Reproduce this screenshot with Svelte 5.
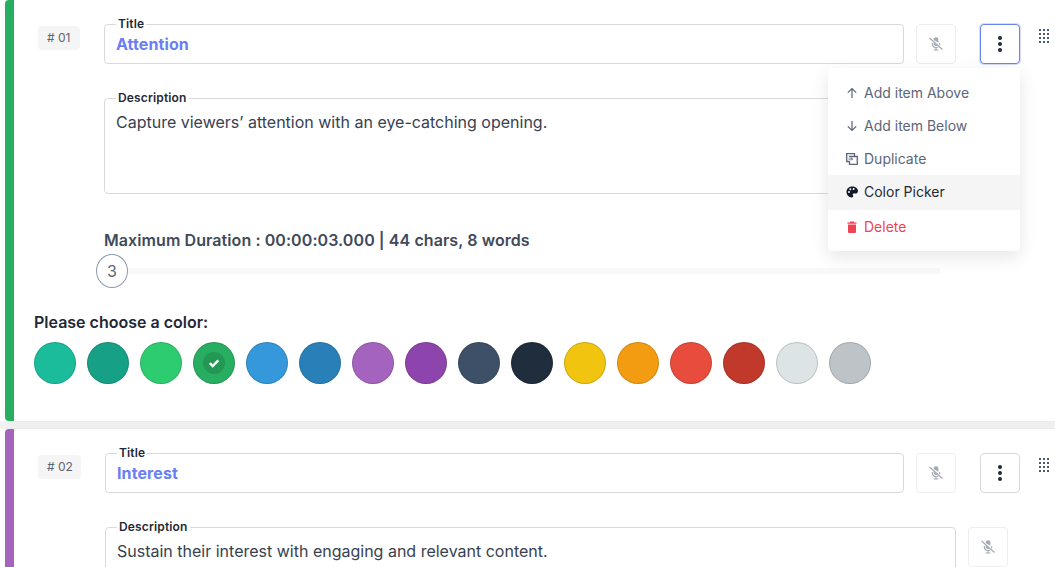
<script>
    const swatches = [
        '#1abc9c', '#16a085', '#2ecc71', '#27ae60', '#3498db', '#2980b9', '#a463bf', '#8e44ad', '#3d5068',
        '#1f2d3d', '#f1c40f', '#f39c12', '#e74c3c', '#c0392b', '#dde4e6', '#bdc3c7'
    ];
    const selected = '#27ae60';
    const menu = [
        { label: 'Add item Above', icon: 'up' },
        { label: 'Add item Below', icon: 'down' },
        { label: 'Duplicate', icon: 'copy' },
        { label: 'Color Picker', icon: 'palette', active: true },
        { label: 'Delete', icon: 'trash', danger: true }
    ];
    const handleDots = Array.from({ length: 12 }, (_, i) => i);
</script>

{#snippet micOff()}
    <svg class="mic" viewBox="0 0 16 16" width="16" height="16" aria-hidden="true">
        <path d="M5.6 3.6a2.4 2.4 0 0 1 4.8 0v3.2L5.7 3.900z M5.6 6.400l3.900 3.100a2.400 2.400 0 0 1-3.900-1.700z" fill="#a3a9b3"/>
        <path d="M3.800 7v1a4.200 4.200 0 0 0 3.600 4.100v1.400H5.600v1.100h4.800v-1.100H8.600v-1.400c.8-.1 1.400-.4 2-.8l-.9-.7a3.100 3.100 0 0 1-4.800-2.600V7z M12.200 7h-1.100v1c0 .3 0 .5-.1.8l.9.7c.2-.5.3-1 .3-1.500z" fill="#a3a9b3"/>
        <path d="M1.500 2l13 11.500" stroke="#a3a9b3" stroke-width="1.100" fill="none"/>
    </svg>
{/snippet}

{#snippet dots()}
    <svg viewBox="0 0 4 16" width="4" height="16" aria-hidden="true">
        <circle cx="2" cy="2" r="2" fill="#1f2937"/>
        <circle cx="2" cy="8" r="2" fill="#1f2937"/>
        <circle cx="2" cy="14" r="2" fill="#1f2937"/>
    </svg>
{/snippet}

{#snippet handle()}
    <div class="handle">
        {#each handleDots as d (d)}
            <span></span>
        {/each}
    </div>
{/snippet}

{#snippet menuIcon(name)}
    <svg viewBox="0 0 12 12" width="12" height="12" aria-hidden="true">
        {#if name === 'up'}
            <path d="M6 11V1.500M1.800 5.700l4.200-4.200 4.200 4.200" fill="none" stroke="currentColor" stroke-width="1.200"/>
        {:else if name === 'down'}
            <path d="M6 1v9.500M1.800 6.300l4.200 4.200 4.200-4.200" fill="none" stroke="currentColor" stroke-width="1.200"/>
        {:else if name === 'copy'}
            <path d="M3.500 8.500H.7V.7h7.800v2.800" fill="none" stroke="currentColor" stroke-width="1.300"/>
            <path d="M3 3.500h8.300v7.800H3.500V8" fill="none" stroke="currentColor" stroke-width="1.300"/>
            <path d="M2.500 6h4M5 4.500L6.500 6 5 7.500" fill="none" stroke="currentColor" stroke-width="1"/>
        {:else if name === 'palette'}
            <path d="M6 .6C2.900.6.500 3 .500 6s2.400 5.400 5.300 5.400c1 0 1.400-.6 1.400-1.200 0-.7-.5-1-.5-1.600 0-.6.500-1 1.100-1h1.400c1.500 0 2.800-1 2.800-2.600C12 2.500 9.300.6 6 .6z" fill="#111827"/>
            <circle cx="3" cy="6" r="1" fill="#fff"/>
            <circle cx="4.300" cy="3.300" r="1" fill="#fff"/>
            <circle cx="7.600" cy="3" r="1" fill="#fff"/>
        {:else}
            <path d="M4.200 0.500h3.600l.5 1H10.500v1.300h-9V1.500h2.200z" fill="currentColor"/>
            <path d="M2 3.600h8V11a1 1 0 0 1-1 1H3a1 1 0 0 1-1-1z" fill="currentColor"/>
        {/if}
    </svg>
{/snippet}

<div class="list">
    <section class="card" style="border-left-color: #27ae60">
        <div class="item">
            <div class="badge"># 01</div>
            <div class="fields">
                <div class="row">
                    <div class="field title-field">
                        <span class="legend">Title</span>
                        <div class="value title">Attention</div>
                    </div>
                    <button class="icon-btn">{@render micOff()}</button>
                    <div class="menu-wrap">
                        <button class="icon-btn more focused">{@render dots()}</button>
                        <ul class="menu">
                            {#each menu as m}
                                <li class:active={m.active} class:danger={m.danger}>
                                    {@render menuIcon(m.icon)}
                                    <span>{m.label}</span>
                                </li>
                            {/each}
                        </ul>
                    </div>
                    {@render handle()}
                </div>
                <div class="row desc-row">
                    <div class="field desc-field">
                        <span class="legend">Description</span>
                        <div class="value">Capture viewers’ attention with an eye-catching opening.</div>
                    </div>
                    <button class="icon-btn">{@render micOff()}</button>
                </div>
                <div class="duration">Maximum Duration : 00:00:03.000 | 44 chars, 8 words</div>
                <div class="slider">
                    <div class="thumb">3</div>
                    <div class="track"></div>
                </div>
            </div>
        </div>
        <div class="colors">
            <div class="colors-label">Please choose a color:</div>
            <div class="swatches">
                {#each swatches as c}
                    <div class="swatch" style="background: {c}">
                        {#if c === selected}
                            <span class="check">
                                <svg viewBox="0 0 12 12" width="12" height="12" aria-hidden="true">
                                    <path d="M1.800 6.200l2.900 2.900L10.300 3.300" fill="none" stroke="#fff" stroke-width="2.400"/>
                                </svg>
                            </span>
                        {/if}
                    </div>
                {/each}
            </div>
        </div>
    </section>

    <section class="card" style="border-left-color: #a463bf">
        <div class="item">
            <div class="badge badge-wide"># 02</div>
            <div class="fields">
                <div class="row">
                    <div class="field title-field">
                        <span class="legend">Title</span>
                        <div class="value title">Interest</div>
                    </div>
                    <button class="icon-btn">{@render micOff()}</button>
                    <div class="menu-wrap">
                        <button class="icon-btn more">{@render dots()}</button>
                    </div>
                    {@render handle()}
                </div>
                <div class="row desc-row">
                    <div class="field desc-field">
                        <span class="legend">Description</span>
                        <div class="value">Sustain their interest with engaging and relevant content.</div>
                    </div>
                    <button class="icon-btn">{@render micOff()}</button>
                </div>
            </div>
        </div>
    </section>
</div>

<style>
    :global(body) {
        background: #fff;
        font-family: Inter, "Liberation Sans", sans-serif;
        color: #1f2937;
    }
    * {
        box-sizing: border-box;
    }
    .list {
        height: 567px;
        overflow: hidden;
        display: flex;
        flex-direction: column;
        gap: 8px;
        background: linear-gradient(#f2f2f2, #f2f2f2) 0 421px / 100% 8px no-repeat;
    }
    .card {
        flex-shrink: 0;
        margin-left: 5px;
        padding: 24px 0 37px 24px;
        background: #fff;
        border-left: 9px solid;
        border-radius: 4px 0 0 4px;
        box-shadow: 0 0 6px rgba(0, 0, 0, .06);
    }
    .item {
        display: flex;
        align-items: flex-start;
        gap: 24px;
    }
    .badge {
        flex-shrink: 0;
        width: 42px;
        margin-top: 2px;
        padding-left: 9px;
        height: 24px;
        line-height: 24px;
        font-size: 12px;
        color: #5b6472;
        background: #f5f5f5;
        border-radius: 4px;
    }
    .badge-wide {
        width: 43px;
    }
    .fields {
        flex: 1;
        min-width: 0;
    }
    .row {
        display: flex;
        align-items: flex-start;
    }
    .desc-row {
        margin-top: 34px;
        padding-right: 47px;
    }
    .field {
        position: relative;
        flex: 1;
        min-width: 0;
        border: 1px solid #d9d9d9;
        border-radius: 4px;
        padding: 0 11px;
    }
    .title-field {
        height: 40px;
    }
    .desc-field {
        height: 96px;
    }
    .legend {
        position: absolute;
        top: -8px;
        left: 11px;
        padding: 0 2px;
        background: #fff;
        font-size: 12px;
        line-height: 14px;
        font-weight: 600;
        letter-spacing: .15px;
        color: #1f2937;
    }
    .value {
        padding-top: 11px;
        font-size: 16px;
        line-height: 24px;
        color: #374151;
    }
    .title-field .value {
        padding-top: 7px;
    }
    .title {
        font-weight: 700;
        letter-spacing: .1px;
        color: #6a7ef5;
    }
    .icon-btn {
        flex-shrink: 0;
        width: 40px;
        height: 40px;
        margin-left: 12px;
        padding: 0;
        display: flex;
        align-items: center;
        justify-content: center;
        background: #fff;
        border: 1px solid #eee;
        border-radius: 4px;
    }
    .menu-wrap {
        position: relative;
        margin-left: 24px;
    }
    .more {
        margin-left: 0;
        border-color: #d9d9d9;
    }
    .more.focused {
        border-color: #6a84f0;
        box-shadow: 0 0 0 1px #d5ddfb;
    }
    .handle {
        flex-shrink: 0;
        display: grid;
        grid-template-columns: repeat(3, 2px);
        gap: 2px;
        margin: 5px 6px 0 19px;
        width: 10px;
    }
    .handle span {
        width: 2px;
        height: 2px;
        background: #4b5a7a;
    }
    .menu {
        position: absolute;
        top: 44px;
        right: 0;
        z-index: 2;
        width: 192px;
        margin: 0;
        padding: 8px 0 6px;
        list-style: none;
        background: #fff;
        border-radius: 4px;
        box-shadow: 0 6px 18px rgba(0, 0, 0, .1);
    }
    .menu li {
        display: flex;
        align-items: center;
        gap: 6px;
        height: 33px;
        padding: 0 18px;
        font-size: 14px;
        color: #5b6678;
    }
    .menu li.active {
        height: 35px;
        padding-bottom: 2px;
        background: #f5f5f5;
        color: #1f2937;
    }
    .menu li.danger {
        height: 35px;
        padding-bottom: 2px;
        color: #ef4454;
    }
    .duration {
        margin-top: 37px;
        font-size: 16px;
        line-height: 18px;
        font-weight: 600;
        letter-spacing: .08px;
        color: #3f4a5a;
    }
    .slider {
        display: flex;
        align-items: center;
        margin: 5px 0 0 -8px;
        width: 844px;
    }
    .thumb {
        flex-shrink: 0;
        width: 32px;
        height: 34px;
        line-height: 32px;
        text-align: center;
        font-size: 16px;
        color: #5b6472;
        background: #fff;
        border: 1px solid #8d99b5;
        border-radius: 50%;
    }
    .track {
        flex: 1;
        height: 6px;
        background: #f8f8fa;
    }
    .colors {
        margin: 25px 0 0 -4px;
    }
    .colors-label {
        font-size: 16px;
        line-height: 18px;
        font-weight: 600;
        color: #1f2937;
    }
    .swatches {
        display: flex;
        gap: 11px;
        margin-top: 11px;
    }
    .swatch {
        width: 42px;
        height: 42px;
        display: flex;
        align-items: center;
        justify-content: center;
        border: 1px solid rgba(0, 0, 0, .15);
        border-radius: 50%;
    }
    .check {
        width: 22px;
        height: 22px;
        display: flex;
        align-items: center;
        justify-content: center;
        background: rgba(0, 0, 0, .12);
        border-radius: 50%;
    }
</style>
